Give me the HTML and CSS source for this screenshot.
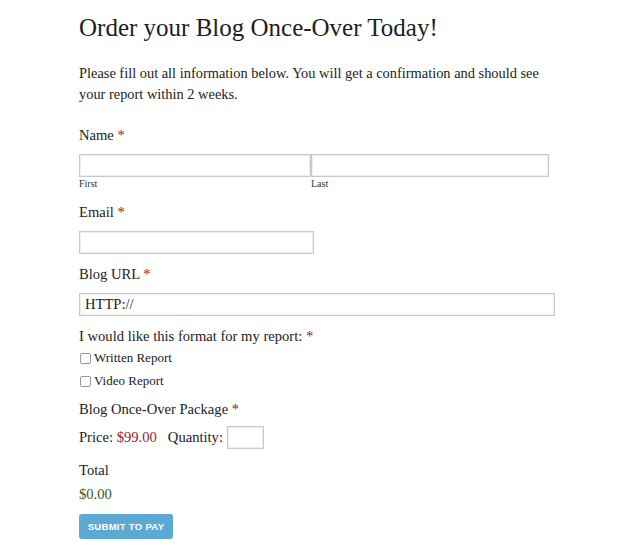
FILE: index.html
```html
<!DOCTYPE html>
<html>
<head>
<meta charset="utf-8">
<link rel="stylesheet" href="styles.css">
</head>
<body>
<div class="page">
  <h1 class="title">Order your Blog Once-Over Today!</h1>
  <p class="intro">Please fill out all information below. You will get a confirmation and should see your report within 2 weeks.</p>

  <div class="field field-first">
    <div class="label">Name <span class="req">*</span></div>
    <div class="name-row">
      <div class="name-col">
        <input class="input input-half" type="text">
        <div class="sub">First</div>
      </div>
      <div class="name-col">
        <input class="input input-half2" type="text">
        <div class="sub">Last</div>
      </div>
    </div>
  </div>

  <div class="field field-email">
    <div class="label">Email <span class="req">*</span></div>
    <input class="input input-email" type="text">
  </div>

  <div class="field">
    <div class="label">Blog URL <span class="req">*</span></div>
    <input class="input input-url" type="text" value="HTTP://">
  </div>

  <div class="field">
    <div class="label">I would like this format for my report: <span class="req">*</span></div>
    <label class="check"><span class="box"></span>Written Report</label>
    <label class="check"><span class="box"></span>Video Report</label>
  </div>

  <div class="field">
    <div class="label">Blog Once-Over Package <span class="req">*</span></div>
    <div class="price-row">
      <span>Price: <span class="price">$99.00</span></span>
      <span class="qty">Quantity:</span>
      <input class="input input-qty" type="text">
    </div>
  </div>

  <div class="field field-total">
    <div class="label">Total</div>
    <div class="total">$0.00</div>
  </div>

  <button class="submit">SUBMIT TO PAY</button>
</div>
</body>
</html>
```

FILE: styles.css
```css
* { box-sizing: border-box; }
html, body { margin: 0; padding: 0; background: #fff; }
body {
  font-family: "Liberation Serif", "DejaVu Serif", serif;
  color: #222;
}
.page {
  padding: 12px 0 0 79px;
  width: 640px;
}
.title {
  font-weight: normal;
  font-size: 25px;
  margin: 0;
  line-height: 32px;
  color: #1e1e1e;
}
.intro {
  font-size: 14.4px;
  line-height: 21px;
  margin: 19px 0 0;
  width: 480px;
}
.label {
  font-size: 14.6px;
  line-height: 20px;
  margin-top: 10px;
}
.field-first .label { margin-top: 20px; }
.field-email .label { margin-top: 12px; }
.field-total .label { margin-top: 11px; }
.req { color: #8e1c1c; }
.name-row { display: flex; margin-top: 9px; }
.name-col { display: flex; flex-direction: column; }
.input {
  display: block;
  border: 1px solid #c9c9c9;
  box-shadow: inset 0 0 0 1px #eee;
  height: 23px;
  background: #fff;
  font-family: "Liberation Serif", serif;
  font-size: 14.6px;
  color: #222;
  padding: 0 5px;
  outline: none;
}
.input-half { width: 232px; }
.input-half2 { width: 238px; }
.sub {
  font-size: 10px;
  line-height: 12px;
  margin-top: 1px;
  color: #333;
}
.input-email { width: 235px; margin-top: 9px; }
.input-url { width: 476px; margin-top: 9px; }
.check {
  display: flex;
  align-items: center;
  font-size: 13px;
  line-height: 16px;
  margin-top: 4px;
}
.check + .check { margin-top: 7px; }
.box {
  width: 11px;
  height: 11px;
  border: 1px solid #999;
  border-radius: 2px;
  margin: 0 3px 0 1px;
  background: #fff;
}
.price-row {
  display: flex;
  align-items: center;
  font-size: 14.6px;
  margin-top: 7px;
}
.price { color: #9b1d1d; }
.qty { margin-left: 11px; margin-right: 4px; }
.input-qty { width: 37px; height: 23px; }
.total {
  font-size: 14.6px;
  line-height: 20px;
  margin-top: 4px;
  color: #2f5a1e;
}
.submit {
  display: block;
  margin-top: 10px;
  width: 94px;
  height: 25px;
  border: none;
  border-radius: 3px;
  background: #5ca9d3;
  color: #fff;
  font-family: "Liberation Sans", Arial, sans-serif;
  font-weight: bold;
  font-size: 9.5px;
  letter-spacing: 0.3px;
  padding: 0;
}
```
